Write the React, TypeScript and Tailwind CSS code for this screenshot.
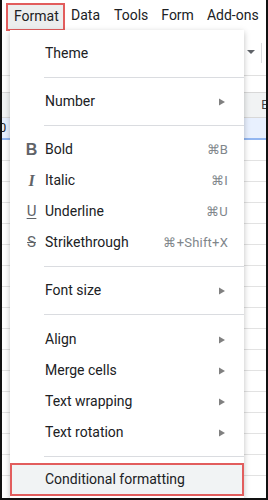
import React from "react";

const Arrow = () => (
  <svg width="8" height="8" viewBox="0 0 8 8" className="shrink-0">
    <path d="M1 0.5 L7 4 L1 7.5 Z" fill="#808080" />
  </svg>
);

const Sep = () => <div className="ml-[34px] h-px bg-[#dadce0] my-[8px]" />;

type ItemProps = { label: string; icon?: React.ReactNode; shortcut?: string; arrow?: boolean; h?: string };

const Item = ({ label, icon, shortcut, arrow }: ItemProps) => (
  <div className="flex items-center h-[31px] pl-[8px] pr-[16px]">
    <div className="w-[27px] flex items-center justify-center text-[#5f6368]">{icon}</div>
    <div className="flex-1 text-[14px] text-[#202124]">{label}</div>
    {shortcut && <div className="text-[13px] text-[#80868b] tracking-[0.2px]">{shortcut}</div>}
    {arrow && <div className="pr-[2px]"><Arrow /></div>}
  </div>
);

export default function App() {
  const rowsLeft = [160, 181, 202, 223, 244, 265, 286, 307, 328, 349, 370, 391, 412, 433, 454, 475];
  return (
    <div className="w-[268px] h-[500px] relative overflow-hidden bg-white border-l-2 border-r-2 border-b-2 border-[#111]" style={{ fontFamily: "Roboto, 'Liberation Sans', sans-serif" }}>
      {/* menu bar */}
      <div className="flex items-center h-[30px] text-[14px] text-[#202124]">
        <div className="ml-[4px] mt-[3px] h-[28px] w-[59px] pl-[6px] flex items-center bg-[#eceeee] border-2 border-[#e25d5d]">Format</div>
        <div className="ml-[6px]">Data</div>
        <div className="ml-[14px]">Tools</div>
        <div className="ml-[13px]">Form</div>
        <div className="ml-[13px]">Add-ons</div>
      </div>
      {/* background spreadsheet */}
      <div className="relative h-[470px]">
        <div className="h-[45px] flex items-center justify-end pr-[4px] gap-[6px]">
          <svg width="8" height="5" viewBox="0 0 8 5"><path d="M0 0 L8 0 L4 4 Z" fill="#5f6368" /></svg>
          <div className="w-px h-[20px] bg-[#dadce0]" />
        </div>
        <div className="h-px bg-[#e0e0e0]" />
        <div className="h-[16px]" />
        <div className="h-[26px] bg-[#f1f3f4] border-t border-b border-[#d8d8d8] flex items-center justify-end text-[12px] text-[#444]">
          <span className="mr-[-2px]">E</span>
        </div>
        <div className="h-[20px] bg-[#e8f0fe] flex items-center text-[13px] text-[#202124]">
          <span className="ml-[-3px]">0</span>
        </div>
        <div className="h-[2px] bg-[#4a86e8] opacity-60" />
        {rowsLeft.map((r) => (
          <div key={r} className="h-[21px] border-b border-[#e2e2e2]" />
        ))}
      </div>
      {/* dropdown menu */}
      <div className="absolute left-[8px] top-[30px] w-[234px] bottom-0 bg-white shadow-[0_2px_6px_rgba(0,0,0,0.25)] pt-[8px]">
        <Item label="Theme" />
        <Sep />
        <Item label="Number" arrow />
        <Sep />
        <Item label="Bold" shortcut="⌘B" icon={<span className="font-bold text-[16px] text-[#5f6368]" style={{ fontFamily: "'Liberation Sans', sans-serif" }}>B</span>} />
        <Item label="Italic" shortcut="⌘I" icon={<span className="italic font-bold text-[16px] text-[#5f6368]" style={{ fontFamily: "'Liberation Serif', serif" }}>I</span>} />
        <Item label="Underline" shortcut="⌘U" icon={<span className="text-[15px] text-[#5f6368] underline underline-offset-2">U</span>} />
        <Item label="Strikethrough" shortcut="⌘+Shift+X" icon={<span className="text-[15px] text-[#5f6368] line-through">S</span>} />
        <Sep />
        <Item label="Font size" arrow />
        <Sep />
        <div className="h-[1px]" />
        <Item label="Align" arrow />
        <Item label="Merge cells" arrow />
        <Item label="Text wrapping" arrow />
        <Item label="Text rotation" arrow />
        <Sep />
      </div>
      <div className="absolute left-[8px] top-[463px] w-[234px] h-[33px] bg-[#f1f3f4] border-2 border-[#e25d5d] flex items-center pl-[33px] text-[14px] text-[#202124]">
        Conditional formatting
      </div>
    </div>
  );
}
